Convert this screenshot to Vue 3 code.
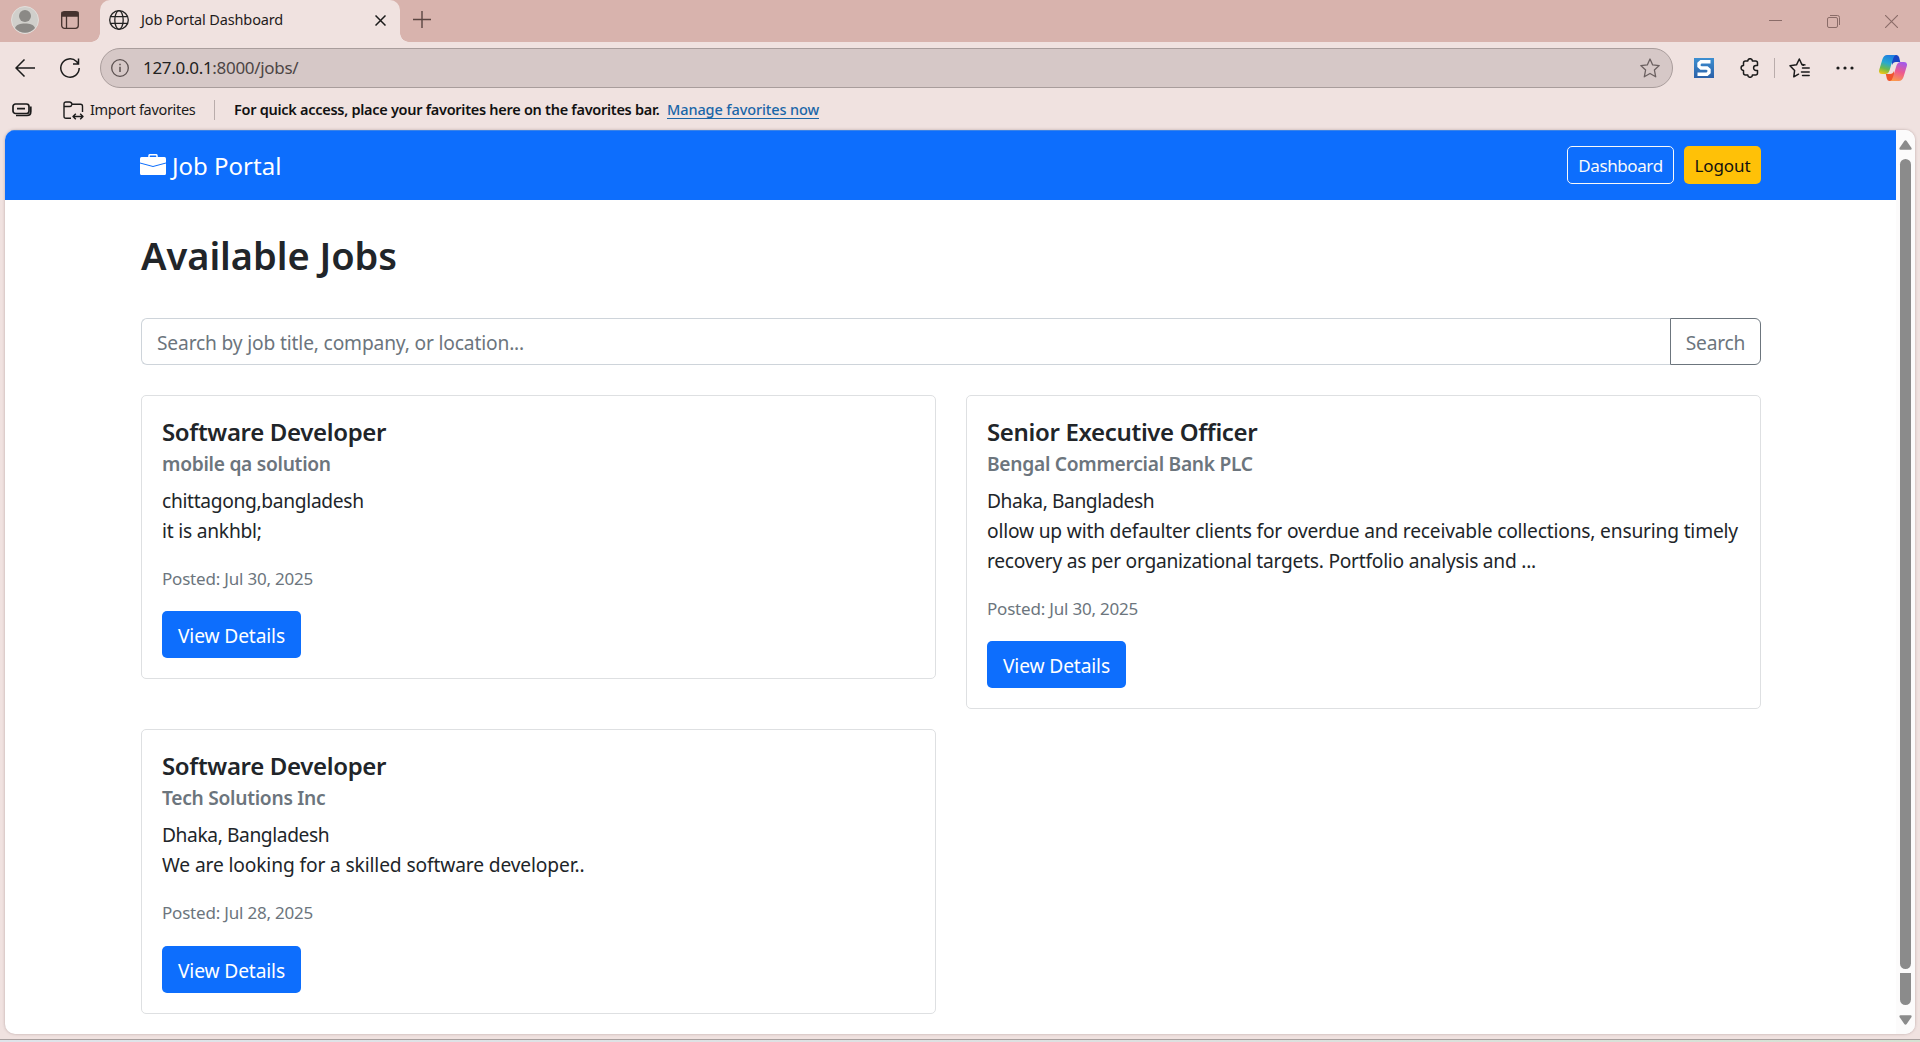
<script setup>
// tracking: letter-spacing in px for the location and each description line
const jobs = [
  { title: 'Software Developer', company: 'mobile qa solution', location: 'chittagong,bangladesh', lines: ['it is ankhbl;'], posted: 'Jul 30, 2025', tracking: [-0.32, -0.22] },
  { title: 'Senior Executive Officer', company: 'Bengal Commercial Bank PLC', location: 'Dhaka, Bangladesh', lines: ['ollow up with defaulter clients for overdue and receivable collections, ensuring timely', 'recovery as per organizational targets. Portfolio analysis and ...'], posted: 'Jul 30, 2025', tracking: [-0.4, -0.19, -0.25] },
  { title: 'Software Developer', company: 'Tech Solutions Inc', location: 'Dhaka, Bangladesh', lines: ['We are looking for a skilled software developer..'], posted: 'Jul 28, 2025', tracking: [-0.4, -0.13] },
]
</script>

<template>
  <div class="browser">
    <div class="tabbar">
      <svg class="avatar" width="28" height="28" viewBox="0 0 28 28">
        <circle cx="14" cy="14" r="13.5" fill="#d0cfcb" stroke="#e3dedb" />
        <circle cx="14" cy="10" r="6" fill="#8b8986" />
        <path d="M4 22C5.500 18.500 9 17.500 14 17.500S22.500 18.500 24 22A13 13 0 0 1 4 22Z" fill="#8b8986" />
      </svg>
      <svg class="workspace" width="18" height="18" viewBox="0 0 18 18" fill="none" stroke="#46332f" stroke-width="1.300">
        <rect x="0.700" y="0.700" width="16.600" height="16.600" rx="2.800" />
        <path d="M1 1.500H17V5H1Z" fill="#46332f" />
        <path d="M5.500 5V17" />
      </svg>
      <div class="tab">
        <svg width="20" height="20" viewBox="0 0 20 20" fill="none" stroke="#222" stroke-width="1.300">
          <circle cx="10" cy="10" r="9.300" />
          <ellipse cx="10" cy="10" rx="4.200" ry="9.300" />
          <path d="M1.500 6.700H18.500M1.500 13.300H18.500" />
        </svg>
        <span class="tab-title">Job Portal Dashboard</span>
        <svg class="tab-close" width="11" height="11" viewBox="0 0 11 11" stroke="#1b1b1b" stroke-width="1.500"><path d="M.5 .5L10.500 10.500M10.500 .5L.5 10.500" /></svg>
      </div>
      <svg class="plus" width="18" height="18" viewBox="0 0 18 18" stroke="#5b4642" stroke-width="1.400"><path d="M9 0V17M0 8.500H18" /></svg>
      <div class="window-buttons">
        <svg width="13" height="13" viewBox="0 0 13 13" stroke="#8a6c68"><path d="M0 5.500H13" /></svg>
        <svg width="13" height="13" viewBox="0 0 13 13" fill="none" stroke="#8a6c68"><rect x=".5" y="2.500" width="10" height="10" rx="1.500" /><path d="M3 .5H10.500Q12.500 .5 12.500 2.500V10" /></svg>
        <svg width="13" height="13" viewBox="0 0 13 13" stroke="#8a6c68" stroke-width="1.100"><path d="M0 0L13 13M13 0L0 13" /></svg>
      </div>
    </div>

    <div class="toolbar">
      <svg class="back" width="20" height="18" viewBox="0 0 20 18" fill="none" stroke="#1b1b1b" stroke-width="1.500"><path d="M20 9H1M9.500 .5L1 9L9.500 17.500" /></svg>
      <svg class="reload" width="20" height="20" viewBox="0 0 20 20" fill="none" stroke="#1b1b1b" stroke-width="1.500"><path d="M19.200 10A9.200 9.200 0 1 1 16.500 3.500L18.500 5.800M18.500 .5V6H13" /></svg>
      <div class="address">
        <svg width="18" height="18" viewBox="0 0 18 18" fill="none" stroke="#5b5050" stroke-width="1.300"><circle cx="9" cy="9" r="8.300" /><path d="M9 7.800V13M9 4.800V6.200" stroke-width="1.500" /></svg>
        <span class="url"><b>127.0.0.1</b>:8000/jobs/</span>
        <svg class="star" width="20" height="20" viewBox="0 0 20 20" fill="none" stroke="#6b6060" stroke-width="1.300" stroke-linejoin="round"><path d="M10 1L12.700 6.900L19.200 7.600L14.400 12L15.700 18.800L10 15.500L4.300 18.800L5.600 12L.8 7.600L7.300 6.900Z" /></svg>
      </div>
      <svg class="snagit" width="20" height="20" viewBox="0 0 20 20">
        <defs><linearGradient id="sg" x1="0" y1="0" x2="0" y2="1"><stop offset="0" stop-color="#3d8fd1" /><stop offset="1" stop-color="#2b60a8" /></linearGradient></defs>
        <rect width="20" height="20" fill="url(#sg)" />
        <path d="M16.500 3.800H7L5 5.500V8.300L7 10H13L15 11.700V14.500L13 16.200H3.500" fill="none" stroke="#fff" stroke-width="3.400" />
      </svg>
      <svg class="puzzle" width="19" height="20" viewBox="0 0 19 20" fill="none" stroke="#1b1b1b" stroke-width="1.500" stroke-linejoin="round"><path d="M5.500 3H7.800A2.300 2.300 0 0 1 12.400 3H15.500Q17.500 3 17.500 5V7.600H16A2.400 2.400 0 0 0 16 12.400H17.500V15Q17.500 17 15.500 17H12.400A2.300 2.300 0 0 1 7.800 17H5.500Q3.500 17 3.500 15V12.400A2.400 2.400 0 0 1 3.500 7.600V5Q3.500 3 5.500 3Z" /></svg>
      <i class="sep"></i>
      <svg class="favs" width="21" height="20" viewBox="0 0 21 20" fill="none" stroke="#1b1b1b" stroke-width="1.500" stroke-linejoin="round" stroke-linecap="round"><path d="M9.500 16.200L4.800 18.800L5.600 12.500L1 7.700L7.500 6.800L10.300 1L13 6.800L14.500 7.200M13.500 10H20.200M12.500 14H20.200" /><path d="M13.500 6.800L16 7.200M13.500 17.800H20.200" stroke-width="1.400" transform="translate(0 -.3)" /></svg>
      <svg class="dots" width="18" height="4" viewBox="0 0 18 4" fill="#1b1b1b"><circle cx="2" cy="2" r="1.600" /><circle cx="9" cy="2" r="1.600" /><circle cx="16" cy="2" r="1.600" /></svg>
      <svg class="copilot" width="28" height="26" viewBox="0 0 28 26">
        <defs>
          <linearGradient id="ca" x1=".5" y1="0" x2=".2" y2="1"><stop offset="0" stop-color="#1f7fe0" /><stop offset=".4" stop-color="#28a9d0" /><stop offset=".7" stop-color="#6cba4d" /><stop offset="1" stop-color="#f3c514" /></linearGradient>
          <linearGradient id="cb" x1=".6" y1="0" x2=".3" y2="1"><stop offset="0" stop-color="#a45be8" /><stop offset=".5" stop-color="#ee5a8d" /><stop offset="1" stop-color="#fb9a4c" /></linearGradient>
        </defs>
        <path d="M13 0H17.500Q19.500 0 20.200 2.500L21.200 7H17Q14 7 13 10Z" fill="#1a45c4" />
        <path d="M15 26H10.500Q8.500 26 7.800 23.500L6.800 19H11Q14 19 15 16Z" fill="#f0542d" />
        <path d="M8 0H17Q15 .5 14 4L10.500 15.500Q9.300 19 6.500 19H3Q-1 19 .3 14.500L3.500 4Q5 0 8 0Z" fill="url(#ca)" />
        <path d="M20 26H11Q13 25.500 14 22L17.500 10.500Q18.700 7 21.500 7H25Q29 7 27.700 11.500L24.500 22Q23 26 20 26Z" fill="url(#cb)" />
      </svg>
    </div>

    <div class="favbar">
      <svg class="stack" width="21" height="14" viewBox="0 0 21 14" fill="none" stroke="#1b1b1b" stroke-width="1.700"><rect x="1" y="1" width="16" height="9.500" rx="2.500" /><path d="M5 5.700H13M18.800 3.500V8.500Q18.800 12.500 15 12.500H4" /></svg>
      <svg class="folder" width="21" height="19" viewBox="0 0 21 19" fill="none" stroke="#1b1b1b" stroke-width="1.400" stroke-linejoin="round"><path d="M8 17.300H3Q1 17.300 1 15.300V3Q1 1 3 1H6.500Q8.500 1 9 3.300H17.500Q19.500 3.300 19.500 5.300V11M1 5.500H6.500Q8.500 5.500 9 3.300M10.500 15.500H19.500M12.800 12.800L10 15.500L12.800 18.200M17.200 12.800L20 15.500L17.200 18.200" /></svg>
      <span class="import">Import favorites</span>
      <i class="sep"></i>
      <span class="quick">For quick access, place your favorites here on the favorites bar.</span>
      <a class="manage">Manage favorites now</a>
    </div>

    <div class="viewport">
      <div class="page">
        <nav class="navbar">
          <svg width="26" height="21" viewBox="0 0 26 21"><path d="M9 3V1.800Q9 .7 10.200 .7H15.800Q17 .7 17 1.800V3" fill="none" stroke="#fff" stroke-width="1.500" /><path d="M1.500 3H24.500Q26 3 26 4.500V8.500L13 12L0 8.500V4.500Q0 3 1.500 3Z" fill="#fff" /><path d="M0 9.600L13 13.100L26 9.600V19.500Q26 21 24.500 21H1.500Q0 21 0 19.500Z" fill="#fff" /></svg>
          <span class="brand">Job Portal</span>
          <button class="btn-sm outline">Dashboard</button>
          <button class="btn-sm warn">Logout</button>
        </nav>
        <main class="container">
          <h2>Available Jobs</h2>
          <div class="search">
            <div class="field">Search by job title, company, or location...</div>
            <button>Search</button>
          </div>
          <div class="row">
            <article v-for="(job, i) in jobs" :key="i" class="card">
              <h5>{{ job.title }}</h5>
              <h6>{{ job.company }}</h6>
              <p class="body">
                <span :style="{ letterSpacing: job.tracking[0] + 'px' }">{{ job.location }}</span>
                <span v-for="(line, n) in job.lines" :key="n" :style="{ letterSpacing: job.tracking[n + 1] + 'px' }">{{ line }}</span>
              </p>
              <p class="posted">Posted: {{ job.posted }}</p>
              <a class="btn">View Details</a>
            </article>
          </div>
        </main>
      </div>
      <div class="scrollbar">
        <svg width="13" height="10" viewBox="0 0 13 10" fill="#8b8b8b"><path d="M5.300 1Q6.500-.5 7.700 1L12.500 8Q13 9.500 11.500 9.700H1.500Q0 9.500 .5 8Z" /></svg>
        <i class="thumb"></i>
        <i class="thumb tail"></i>
        <svg class="down" width="13" height="10" viewBox="0 0 13 10" fill="#8b8b8b"><path d="M5.300 9Q6.500 10.500 7.700 9L12.500 2Q13 .5 11.500 .3H1.500Q0 .5 .5 2Z" /></svg>
      </div>
    </div>
    <div class="edge"></div>
  </div>
</template>

<style>
body { margin: 0; overflow: hidden; }
</style>

<style scoped>
* { box-sizing: border-box; }
.browser { width: 1920px; height: 1042px; background: #f0e2e0; font-family: "Noto Sans", "Open Sans", sans-serif; color: #212529; display: flex; flex-direction: column; overflow: hidden; }
svg, i { flex: none; display: block; }
span, a { white-space: nowrap; }

.tabbar { height: 42px; background: #d8b3ad; display: flex; align-items: flex-start; flex: none; }
.avatar { margin: 6px 0 0 11px; }
.workspace { margin: 11px 0 0 22px; }
.tab { position: relative; width: 300px; height: 42px; margin-left: 21px; padding: 0 14px 10px 9px; background: #f0e2e0; border-radius: 10px 10px 0 0; display: flex; align-items: center; }
.tab::before, .tab::after { content: ""; position: absolute; bottom: 0; width: 9px; height: 9px; }
.tab::before { left: -9px; background: radial-gradient(circle at 0 0, transparent 8.500px, #f0e2e0 9px); }
.tab::after { right: -9px; background: radial-gradient(circle at 100% 0, transparent 8.500px, #f0e2e0 9px); }
.tab svg { margin-top: 8px; }
.tab-title { margin: 6px 0 0 12px; font-size: 14.500px; letter-spacing: -0.14px; color: #1f1b1b; }
.tab .tab-close { margin: 9px 0 0 auto; }
.plus { margin: 11px 0 0 13px; }
.window-buttons { margin: 15px 22px 0 auto; display: flex; gap: 45px; }

.toolbar { height: 52px; flex: none; display: flex; align-items: center; }
.back { margin-left: 15px; }
.reload { margin-left: 25px; }
.address { width: 1573px; height: 40px; margin-left: 20px; padding: 0 12px 0 10px; background: #d6c8c7; border: 1px solid #a99d9c; border-radius: 20px; display: flex; align-items: center; }
.url { margin: 0 0 2px 14px; font-size: 17px; letter-spacing: -0.3px; color: #4d4545; }
.url b { font-weight: 400; color: #222; }
.star { margin-left: auto; }
.snagit { margin-left: 21px; }
.puzzle { margin-left: 26px; }
.sep { width: 1px; height: 20px; background: #b9acab; }
.toolbar .sep { margin-left: 15px; }
.favs { margin-left: 14px; }
.dots { margin-left: 26px; }
.copilot { margin-left: 25px; }

.favbar { height: 36px; flex: none; display: flex; align-items: center; font-size: 14.500px; color: #1b1b1b; }
.favbar > * { margin-bottom: 4px; }
.favbar > span { margin-bottom: 6px; }
.stack { margin-left: 12px; }
.folder { margin-left: 30px; }
.import { margin-left: 6px; width: 106px; letter-spacing: -0.32px; }
.favbar .sep { margin-left: 18px; }
.quick { margin-left: 19px; width: 425px; font-weight: 600; letter-spacing: -0.28px; color: #111; }
.manage { margin-left: 8px; font-weight: 500; letter-spacing: -0.1px; color: #1a66a8; border-bottom: 1px solid #1a66a8; line-height: 17px; }

.viewport { width: 1910px; height: 904px; margin-left: 5px; flex: none; display: flex; background: #fff; border-radius: 10px; overflow: hidden; box-shadow: 0 0 3px rgba(90, 60, 60, 0.35); }
.page { width: 1891px; }
.navbar { height: 70px; background: #0d6efd; display: flex; align-items: center; padding: 0 135px 2px; border-top: 1px solid #3a83e8; }
.brand { margin: 1px auto 0 6px; font-size: 24px; color: #fff; }
.btn-sm { height: 38px; border-radius: 5px; padding: 2px 0 0; font: 17px "Noto Sans", sans-serif; margin-left: 10px; }
.outline { width: 107px; background: none; border: 1px solid #f8f9fa; color: #f8f9fa; letter-spacing: -0.4px; }
.warn { width: 77px; background: #ffc107; border: 0; color: #111; letter-spacing: -0.1px; }

.container { width: 1620px; margin-left: 136px; }
h2 { margin: 0; padding-top: 31px; font-size: 38px; font-weight: 600; line-height: 48px; letter-spacing: -0.05px; }
.search { margin-top: 39px; height: 47px; display: flex; }
.field { flex: 1; border: 1px solid #ced4da; border-right: 0; border-radius: 6px 0 0 6px; padding-left: 15px; line-height: 47px; font-size: 19.200px; letter-spacing: -0.16px; color: #6c757d; }
.search button { width: 91px; border: 1px solid #6c757d; border-radius: 0 6px 6px 0; background: none; padding: 2px 0 0; font: 19.200px "Noto Sans", sans-serif; letter-spacing: -0.2px; color: #6c757d; }
.row { margin-top: 30.100px; display: grid; grid-template-columns: 795px 795px; column-gap: 30px; row-gap: 20px; align-items: start; }
.card { border: 1px solid #dee0e2; border-radius: 5px; padding: 21px 20px 20px; }
h5 { margin: 0 0 5px; font-size: 24px; font-weight: 600; line-height: 30px; letter-spacing: -0.34px; }
h6 { margin: 0 0 10px; font-size: 19.200px; font-weight: 600; line-height: 24px; letter-spacing: -0.28px; color: #6c757d; }
p { margin: 0 0 20px; }
.body { font-size: 19.200px; line-height: 30px; }
.body span { display: block; }
.posted { margin-bottom: 19px; font-size: 17px; line-height: 26.250px; letter-spacing: -0.2px; color: #6c757d; }
.btn { width: 139px; height: 47px; padding-top: 2px; display: flex; align-items: center; justify-content: center; background: #0d6efd; border-radius: 5px; color: #fff; font-size: 19.200px; letter-spacing: -0.13px; }

.scrollbar { width: 19px; padding: 10px 0 0 4px; background: #fcfbfb; }
.scrollbar svg { margin-left: -1px; }
.thumb { width: 11px; height: 810px; margin: 9px 0 0 0; border-radius: 6px; background: #8b8b8b; }
.tail { height: 32px; margin-top: 4px; border-radius: 0 0 6px 6px; }
.scrollbar .down { margin-top: 10px; }
.edge { margin-top: auto; height: 3px; border-top: 1px solid #a89f9e; background: linear-gradient(90deg, #dfe4ea, #dde0e0 60%, #d5e2d3); }
</style>
